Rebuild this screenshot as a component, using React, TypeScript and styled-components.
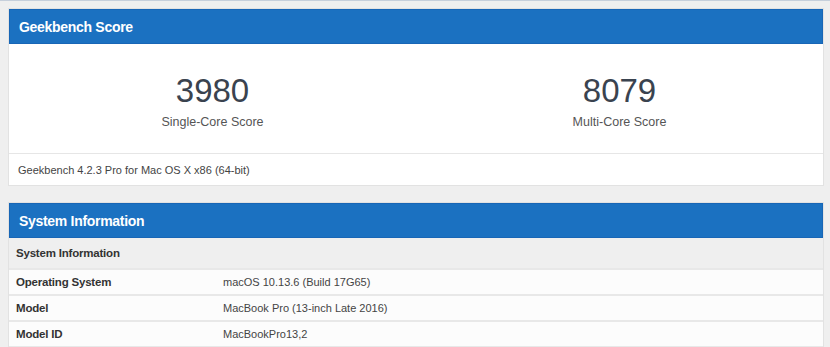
import styled, { createGlobalStyle } from 'styled-components';

const GlobalStyle = createGlobalStyle`
  html, body {
    margin: 0;
    padding: 0;
    background: #efefef;
  }
  body {
    font-family: 'Liberation Sans', Arial, sans-serif;
    border-top: 1px solid #c6cfdb;
  }
`;

const Page = styled.div`
  width: 830px;
  height: 346px;
  box-sizing: border-box;
  padding: 7px 6px 0 8px;
  overflow: hidden;
  background: #efefef;
`;

const Card = styled.section<{ $gap?: number }>`
  border: 1px solid #e2e2e2;
  background: #fff;
  margin-top: ${(p) => p.$gap ?? 0}px;
`;

const CardHeader = styled.div`
  height: 35px;
  box-sizing: border-box;
  background: #1b71c1;
  border: 1px solid #1866b6;
  padding-left: 9px;
  display: flex;
  align-items: center;
  color: #fff;
  font-weight: 700;
  font-size: 14px;
  letter-spacing: -0.3px;
`;

const ScoreGrid = styled.div`
  display: grid;
  grid-template-columns: 1fr 1fr;
  padding: 28px 0 23px;
  border-bottom: 1px solid #e6e6e6;
`;

const Score = styled.div`
  display: flex;
  flex-direction: column;
  align-items: center;
  gap: 4px;
`;

const ScoreValue = styled.div`
  font-size: 33px;
  line-height: 38px;
  color: #3a434f;
`;

const ScoreLabel = styled.div`
  font-size: 12.5px;
  line-height: 16px;
  color: #555;
`;

const Footnote = styled.div`
  height: 31px;
  display: flex;
  align-items: center;
  padding-left: 9px;
  font-size: 11px;
  color: #444;
`;

const Table = styled.div`
  background: #fcfcfc;
`;

const SubHeader = styled.div`
  height: 30px;
  display: flex;
  align-items: center;
  padding-left: 7px;
  background: #efefef;
  font-size: 11.5px;
  font-weight: 700;
  letter-spacing: -0.2px;
  color: #333;
`;

const Row = styled.div`
  display: grid;
  grid-template-columns: 214px 1fr;
  height: 24px;
  align-items: center;
  border-top: 2px solid #e8e8e8;
  font-size: 11px;
`;

const Label = styled.div`
  padding-left: 7px;
  font-size: 11.5px;
  font-weight: 700;
  letter-spacing: -0.2px;
  color: #333;
`;

const Value = styled.div`
  color: #444;
`;

const rows = [
  ['Operating System', 'macOS 10.13.6 (Build 17G65)'],
  ['Model', 'MacBook Pro (13-inch Late 2016)'],
  ['Model ID', 'MacBookPro13,2'],
];

export default function App() {
  return (
    <>
      <GlobalStyle />
      <Page>
        <Card>
          <CardHeader>Geekbench Score</CardHeader>
          <ScoreGrid>
            <Score>
              <ScoreValue>3980</ScoreValue>
              <ScoreLabel>Single-Core Score</ScoreLabel>
            </Score>
            <Score>
              <ScoreValue>8079</ScoreValue>
              <ScoreLabel>Multi-Core Score</ScoreLabel>
            </Score>
          </ScoreGrid>
          <Footnote>Geekbench 4.2.3 Pro for Mac OS X x86 (64-bit)</Footnote>
        </Card>
        <Card $gap={16}>
          <CardHeader>System Information</CardHeader>
          <Table>
            <SubHeader>System Information</SubHeader>
            {rows.map(([k, v]) => (
              <Row key={k}>
                <Label>{k}</Label>
                <Value>{v}</Value>
              </Row>
            ))}
            <Row />
          </Table>
        </Card>
      </Page>
    </>
  );
}
